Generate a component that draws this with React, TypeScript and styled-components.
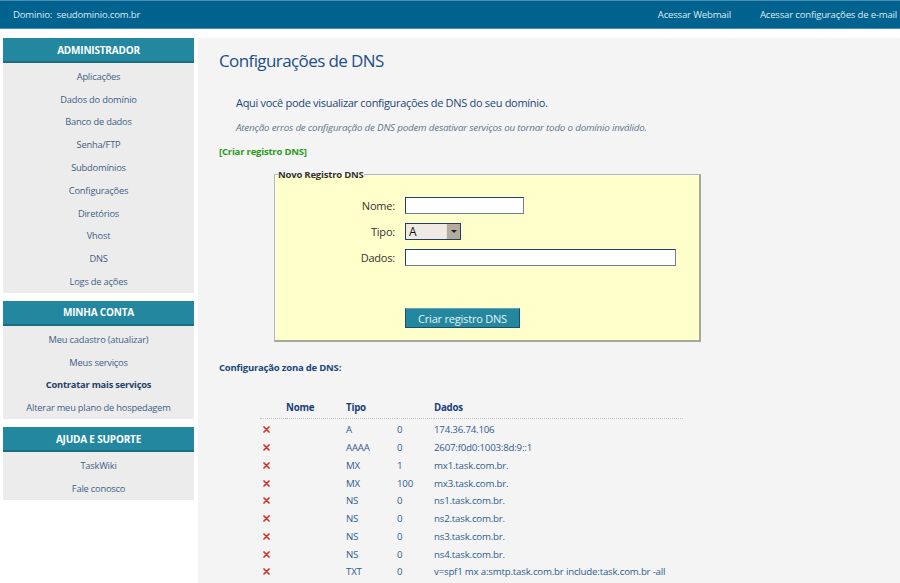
import styled, { createGlobalStyle } from "styled-components";

const GlobalStyle = createGlobalStyle`
  body {
    margin: 0;
    background: #ffffff;
    font-family: "Open Sans", "Noto Sans", sans-serif;
  }
`;

const TopBar = styled.header`
  height: 27px;
  background: #00628f;
  border-top: 1px solid #4b8db3;
  border-bottom: 1px solid #4b8db3;
  display: flex;
  align-items: center;
  padding: 0 3px 0 13px;
  font-size: 9.6px;
  letter-spacing: -0.2px;
  color: #dfeaf2;
`;

const Domain = styled.span`
  flex: 1;
`;

const TopLink = styled.a`
  color: #dfeaf2;
  text-decoration: none;
  margin-left: 29px;
`;

const Layout = styled.div`
  display: flex;
  padding-top: 9px;
  min-height: 545px;
`;

const Sidebar = styled.nav`
  width: 191px;
  margin-left: 3px;
  display: flex;
  flex-direction: column;
  gap: 8px;
`;

const Section = styled.div`
  background: #ececec;
`;

const SectionHeader = styled.div`
  height: 23px;
  background: #23889f;
  border-bottom: 2px solid #1b6d80;
  color: #ffffff;
  font-weight: 700;
  font-size: 10px;
  display: flex;
  align-items: center;
  justify-content: center;
  letter-spacing: -0.2px;
`;

const ItemList = styled.ul`
  list-style: none;
  margin: 0;
  padding: 2px 0 0;
`;

const Item = styled.li<{ $bold?: boolean }>`
  height: 22.8px;
  display: flex;
  align-items: center;
  justify-content: center;
  font-size: 9.3px;
  letter-spacing: -0.2px;
  color: ${(p) => (p.$bold ? "#1e3f66" : "#3e5f86")};
  font-weight: ${(p) => (p.$bold ? 700 : 400)};
`;

const Content = styled.main`
  flex: 1;
  margin-left: 4px;
  background: #f4f4f4;
  padding: 11px 0 0 21px;
`;

const Title = styled.h1`
  margin: 0;
  font-size: 17px;
  line-height: 24px;
  font-weight: 400;
  color: #1d4f86;
  letter-spacing: -0.6px;
`;

const Intro = styled.p`
  margin: 22px 0 0 17px;
  font-size: 11px;
  line-height: 16px;
  color: #1b4678;
  letter-spacing: -0.3px;
`;

const Note = styled.p`
  margin: 10px 0 0 17px;
  font-size: 9.8px;
  line-height: 14px;
  font-style: italic;
  color: #5d7592;
  letter-spacing: -0.2px;
`;

const CreateLink = styled.a`
  display: block;
  margin-top: 10px;
  font-size: 9.5px;
  line-height: 14px;
  font-weight: 700;
  color: #2b9a18;
  letter-spacing: -0.2px;
`;

const Fieldset = styled.fieldset`
  margin: 9px 0 0 55px;
  width: 424px;
  height: 171px;
  box-sizing: content-box;
  padding: 0;
  background: #ffffcc;
  border: 1px solid #b8b8a8;
  border-right: 2px solid #a8a89a;
  border-bottom: 2px solid #a8a89a;
  box-shadow: inset 1px 1px 0 #ffffff;
`;

const Legend = styled.legend`
  margin-left: 3px;
  padding: 0;
  font-size: 9.5px;
  font-weight: 700;
  color: #333333;
  letter-spacing: -0.2px;
`;

const FormGrid = styled.div`
  display: grid;
  grid-template-columns: 120px auto;
  column-gap: 10px;
  row-gap: 9px;
  align-items: center;
  justify-items: start;
  padding-top: 16px;
`;

const Label = styled.label`
  justify-self: end;
  font-size: 11px;
  color: #333333;
  letter-spacing: -0.2px;
`;

const TextInput = styled.input<{ $w: number }>`
  width: ${(p) => p.$w}px;
  height: 17px;
  box-sizing: border-box;
  border: 1px solid #1f3f64;
  border-right-color: #6d7f94;
  border-bottom-color: #6d7f94;
  background: #ffffff;
  padding: 0 3px;
  outline: none;
`;

const SelectBox = styled.div`
  width: 56px;
  height: 17px;
  box-sizing: border-box;
  border: 1px solid #1f3f64;
  display: flex;
  background: #efebe4;
  font-size: 12px;
  color: #111111;
`;

const SelectValue = styled.span`
  flex: 1;
  padding-left: 3px;
  line-height: 15px;
`;

const SelectArrow = styled.span`
  width: 13px;
  background: #b5ab9c;
  border-left: 1px solid #e8e2d8;
  display: flex;
  align-items: center;
  justify-content: center;
  &::after {
    content: "";
    border-left: 3px solid transparent;
    border-right: 3px solid transparent;
    border-top: 3px solid #222222;
  }
`;

const Spacer = styled.div`
  grid-column: 1 / -1;
  height: 24px;
`;

const Button = styled.button`
  grid-column: 2;
  width: 115px;
  height: 20px;
  background: #23889f;
  border: 1px solid #1c4e6e;
  border-top-color: #6c9fb6;
  color: #e8f2f6;
  font-family: inherit;
  font-size: 11px;
  letter-spacing: -0.2px;
  padding: 0;
`;

const ZoneTitle = styled.h3`
  margin: 19px 0 0;
  font-size: 9.5px;
  line-height: 14px;
  font-weight: 700;
  color: #1b4678;
  letter-spacing: -0.2px;
`;

const Table = styled.table`
  margin: 26px 0 0 41px;
  width: 423px;
  border-collapse: collapse;
  font-size: 9.7px;
  letter-spacing: -0.2px;
  color: #2f5d8f;
`;

const Th = styled.th<{ $w?: number }>`
  text-align: left;
  font-weight: 700;
  color: #17407a;
  height: 17px;
  padding: 0;
  width: ${(p) => (p.$w ? `${p.$w}px` : "auto")};
  border-bottom: 1px dotted #c4c4c4;
  vertical-align: top;
`;

const Td = styled.td`
  height: 17.75px;
  padding: 0;
  white-space: nowrap;
`;

const FirstRow = styled.tr`
  td {
    padding-top: 2px;
  }
`;

const Remove = () => (
  <svg width="7" height="7" viewBox="0 0 7 7" style={{ marginLeft: 3, display: "block" }}>
    <path d="M1 1 L6 6 M6 1 L1 6" stroke="#d8322a" strokeWidth="1.7" strokeLinecap="round" />
  </svg>
);

const records = [
  { tipo: "A", prio: "0", dados: "174.36.74.106" },
  { tipo: "AAAA", prio: "0", dados: "2607:f0d0:1003:8d:9::1" },
  { tipo: "MX", prio: "1", dados: "mx1.task.com.br." },
  { tipo: "MX", prio: "100", dados: "mx3.task.com.br." },
  { tipo: "NS", prio: "0", dados: "ns1.task.com.br." },
  { tipo: "NS", prio: "0", dados: "ns2.task.com.br." },
  { tipo: "NS", prio: "0", dados: "ns3.task.com.br." },
  { tipo: "NS", prio: "0", dados: "ns4.task.com.br." },
  { tipo: "TXT", prio: "0", dados: "v=spf1 mx a:smtp.task.com.br include:task.com.br -all" },
];

const menus = [
  {
    title: "ADMINISTRADOR",
    items: [
      "Aplicações",
      "Dados do domínio",
      "Banco de dados",
      "Senha/FTP",
      "Subdomínios",
      "Configurações",
      "Diretórios",
      "Vhost",
      "DNS",
      "Logs de ações",
    ],
  },
  {
    title: "MINHA CONTA",
    items: ["Meu cadastro (atualizar)", "Meus serviços", "Contratar mais serviços", "Alterar meu plano de hospedagem"],
  },
  { title: "AJUDA E SUPORTE", items: ["TaskWiki", "Fale conosco"] },
];

export default function App() {
  return (
    <>
      <GlobalStyle />
      <TopBar>
        <Domain>Dominio:&nbsp; seudominio.com.br</Domain>
        <TopLink>Acessar Webmail</TopLink>
        <TopLink>Acessar configurações de e-mail</TopLink>
      </TopBar>
      <Layout>
        <Sidebar>
          {menus.map((m) => (
            <Section key={m.title}>
              <SectionHeader>{m.title}</SectionHeader>
              <ItemList>
                {m.items.map((it) => (
                  <Item key={it} $bold={it === "Contratar mais serviços"}>
                    {it}
                  </Item>
                ))}
              </ItemList>
            </Section>
          ))}
        </Sidebar>
        <Content>
          <Title>Configurações de DNS</Title>
          <Intro>Aqui você pode visualizar configurações de DNS do seu domínio.</Intro>
          <Note>Atenção erros de configuração de DNS podem desativar serviços ou tornar todo o domínio inválido.</Note>
          <CreateLink>[Criar registro DNS]</CreateLink>
          <Fieldset>
            <Legend>Novo Registro DNS</Legend>
            <FormGrid>
              <Label>Nome:</Label>
              <TextInput $w={119} />
              <Label>Tipo:</Label>
              <SelectBox>
                <SelectValue>A</SelectValue>
                <SelectArrow />
              </SelectBox>
              <Label>Dados:</Label>
              <TextInput $w={271} />
              <Spacer />
              <Button>Criar registro DNS</Button>
            </FormGrid>
          </Fieldset>
          <ZoneTitle>Configuração zona de DNS:</ZoneTitle>
          <Table>
            <thead>
              <tr>
                <Th $w={26} />
                <Th $w={60}>Nome</Th>
                <Th $w={51}>Tipo</Th>
                <Th $w={37} />
                <Th>Dados</Th>
              </tr>
            </thead>
            <tbody>
              {records.map((r, i) => {
                const Row = i === 0 ? FirstRow : "tr";
                return (
                  <Row key={i}>
                    <Td>
                      <Remove />
                    </Td>
                    <Td />
                    <Td>{r.tipo}</Td>
                    <Td>{r.prio}</Td>
                    <Td>{r.dados}</Td>
                  </Row>
                );
              })}
            </tbody>
          </Table>
        </Content>
      </Layout>
    </>
  );
}
